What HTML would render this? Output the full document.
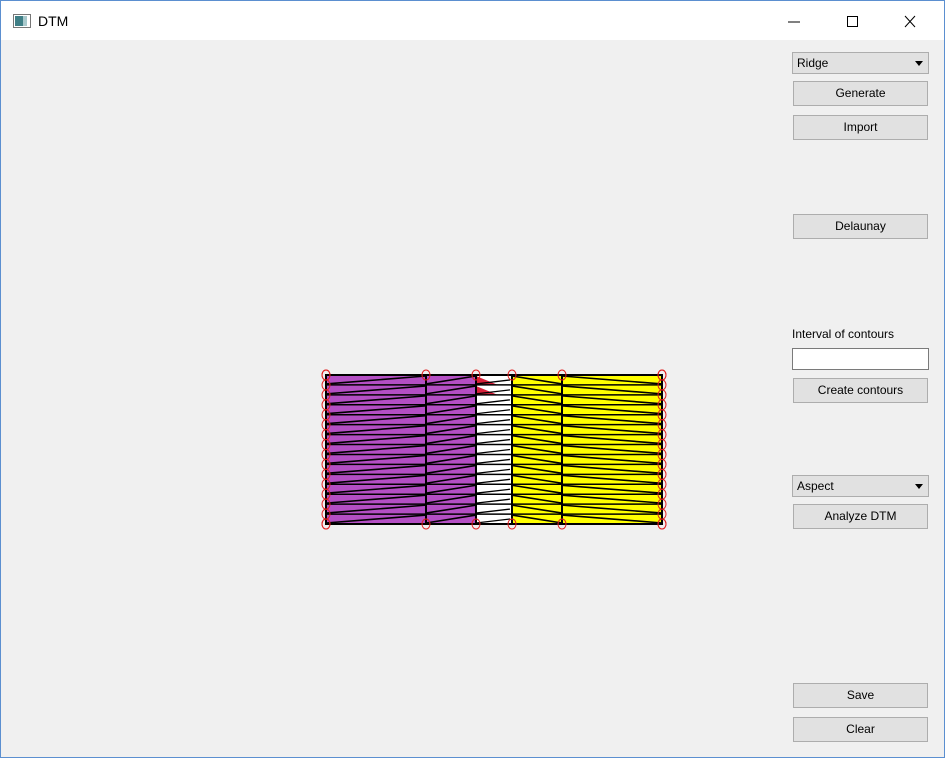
<!DOCTYPE html>
<html><head><meta charset="utf-8"><style>
*{box-sizing:border-box;margin:0;padding:0}
body{width:945px;height:758px;background:#f0f0f0;font-family:"Liberation Sans",sans-serif;font-size:12px;color:#000;position:relative;overflow:hidden}
#win{position:absolute;left:0;top:0;width:945px;height:758px;border:1px solid #5b8fd0;background:#f0f0f0}
#title{position:absolute;left:0;top:0;width:943px;height:39px;background:#fff}
#title .t{position:absolute;left:37px;top:12px;font-size:14px}
.b{position:absolute;left:793px;width:135px;height:25px;background:#e1e1e1;border:1px solid #adadad;text-align:center;line-height:23px}
.c{position:absolute;left:792px;width:137px;height:22px;background:#e1e1e1;border:1px solid #adadad;line-height:20px;padding-left:4px}
.c:after{content:"";position:absolute;right:5px;top:8px;border-left:4px solid transparent;border-right:4px solid transparent;border-top:5px solid #000}
</style></head><body>
<div id="win">
<div id="title">
<svg style="position:absolute;left:12px;top:13px" width="18" height="14"><rect x="0.5" y="0.5" width="17" height="13" fill="#fff" stroke="#777"/><rect x="2" y="2" width="8" height="10" fill="#3f7f86"/><rect x="10" y="2" width="4" height="10" fill="#a9c9cc"/></svg>
<span class="t">DTM</span>
<svg style="position:absolute;left:780px;top:10px" width="150" height="22"><line x1="7" y1="11" x2="19" y2="11" stroke="#000"/><rect x="66.5" y="5.5" width="10" height="10" fill="none" stroke="#000"/><path d="M124 5L134 16M134 5L124 16" stroke="#000"/></svg>
</div>
</div>
<div class="c" style="top:52px">Ridge</div>
<div class="b" style="top:81px">Generate</div>
<div class="b" style="top:115px">Import</div>
<div class="b" style="top:214px">Delaunay</div>
<div style="position:absolute;left:792px;top:327px">Interval of contours</div>
<div style="position:absolute;left:792px;top:348px;width:137px;height:22px;background:#fff;border:1px solid #7a7a7a"></div>
<div class="b" style="top:378px">Create contours</div>
<div class="c" style="top:475px">Aspect</div>
<div class="b" style="top:504px">Analyze DTM</div>
<div class="b" style="top:683px">Save</div>
<div class="b" style="top:717px">Clear</div>
<svg id="g" style="position:absolute;left:0;top:0" width="945" height="758"></svg>
<script>
var xs=[326,426,476,512,562,662],cols=["#b44fc4","#b44fc4","#fff","#ffff00","#ffff00"];
var y0=375,y1=524,n=15,h=(y1-y0)/n,s="";
for(var c=0;c<5;c++){s+='<rect x="'+xs[c]+'" y="'+y0+'" width="'+(xs[c+1]-xs[c])+'" height="'+(y1-y0)+'" fill="'+cols[c]+'"/>';}
s+='<polygon points="476,376 498,385 476,385" fill="#d8203a"/><polygon points="476,386 498,395 476,395" fill="#d8203a"/>';
for(var r=0;r<n;r++){var a=y0+r*h,b=a+h;
for(var c=0;c<5;c++){var L=xs[c],R=xs[c+1];
if(c<2){s+='<path d="M'+L+' '+(b-1)+'L'+R+' '+(a+1)+'" stroke="#000" stroke-width="1.6" fill="none"/>';}
else if(c==2){s+='<path d="M'+L+' '+(b-1)+'L'+(R-2)+' '+(a+h/2)+'" stroke="#000" stroke-width="1.3" fill="none"/>';}
else{s+='<path d="M'+L+' '+(a+1)+'L'+R+' '+(b-1)+'" stroke="#000" stroke-width="1.6" fill="none"/>';}
}
s+='<line x1="326" y1="'+a+'" x2="662" y2="'+a+'" stroke="#000" stroke-width="1.5"/>';}
s+='<rect x="326" y="375" width="336" height="149" fill="none" stroke="#000" stroke-width="2"/>';
for(var c=1;c<5;c++)s+='<line x1="'+xs[c]+'" y1="375" x2="'+xs[c]+'" y2="524" stroke="#000" stroke-width="2"/>';
for(var c=0;c<6;c++){s+='<ellipse cx="'+xs[c]+'" cy="375" rx="4" ry="5" fill="none" stroke="#e02020"/><ellipse cx="'+xs[c]+'" cy="524" rx="4" ry="5" fill="none" stroke="#e02020"/>';}
for(var r=0;r<=n;r++){var y=y0+r*h;s+='<ellipse cx="326" cy="'+y+'" rx="4" ry="5" fill="none" stroke="#e02020"/><ellipse cx="662" cy="'+y+'" rx="4" ry="5" fill="none" stroke="#e02020"/>';}
document.getElementById("g").innerHTML=s;
</script>
</body></html>
